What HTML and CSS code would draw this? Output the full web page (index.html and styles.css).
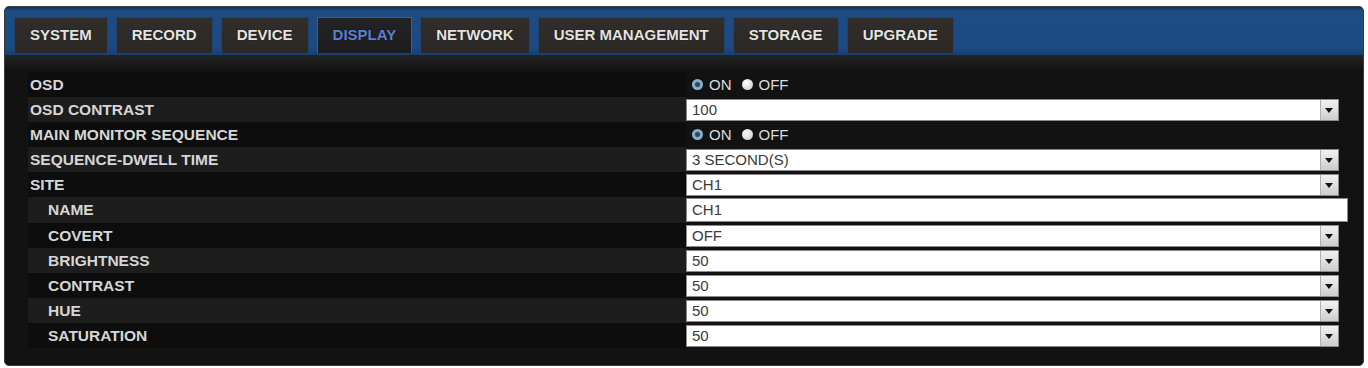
FILE: index.html
```html
<!DOCTYPE html>
<html lang="en">
<head>
    <meta charset="UTF-8">
    <title>Display Setup</title>
    <link rel="stylesheet" href="styles.css">
</head>
<body>
    <div class="panel">
        <!-- Onglets -->
        <div class="tabbar">
            <div class="tab">SYSTEM</div>
            <div class="tab">RECORD</div>
            <div class="tab">DEVICE</div>
            <div class="tab active">DISPLAY</div>
            <div class="tab">NETWORK</div>
            <div class="tab">USER MANAGEMENT</div>
            <div class="tab">STORAGE</div>
            <div class="tab">UPGRADE</div>
        </div>

        <div class="rows">
            <div class="row">
                <div class="label">OSD</div>
                <div class="control">
                    <span class="radio checked"></span><span class="radio-text">ON</span>
                    <span class="radio"></span><span class="radio-text">OFF</span>
                </div>
            </div>
            <div class="row">
                <div class="label">OSD CONTRAST</div>
                <div class="control"><div class="select">100<span class="arrow"></span></div></div>
            </div>
            <div class="row">
                <div class="label">MAIN MONITOR SEQUENCE</div>
                <div class="control">
                    <span class="radio checked"></span><span class="radio-text">ON</span>
                    <span class="radio"></span><span class="radio-text">OFF</span>
                </div>
            </div>
            <div class="row">
                <div class="label">SEQUENCE-DWELL TIME</div>
                <div class="control"><div class="select">3 SECOND(S)<span class="arrow"></span></div></div>
            </div>
            <div class="row">
                <div class="label">SITE</div>
                <div class="control"><div class="select">CH1<span class="arrow"></span></div></div>
            </div>
            <div class="row row-name">
                <div class="label sub">NAME</div>
                <div class="control"><div class="text-input">CH1</div></div>
            </div>
            <div class="row">
                <div class="label sub">COVERT</div>
                <div class="control"><div class="select">OFF<span class="arrow"></span></div></div>
            </div>
            <div class="row">
                <div class="label sub">BRIGHTNESS</div>
                <div class="control"><div class="select">50<span class="arrow"></span></div></div>
            </div>
            <div class="row">
                <div class="label sub">CONTRAST</div>
                <div class="control"><div class="select">50<span class="arrow"></span></div></div>
            </div>
            <div class="row">
                <div class="label sub">HUE</div>
                <div class="control"><div class="select">50<span class="arrow"></span></div></div>
            </div>
            <div class="row">
                <div class="label sub">SATURATION</div>
                <div class="control"><div class="select">50<span class="arrow"></span></div></div>
            </div>
        </div>
    </div>
</body>
</html>
```

FILE: styles.css
```css
body {
    margin: 0;
    background-color: #fff;
    font-family: "Liberation Sans", Arial, sans-serif;
}
.panel {
    margin: 6px 4px 0 4px;
    height: 358px;
    background-color: #121212;
    border: 1px solid #3a3a3a;
    border-radius: 5px;
    overflow: hidden;
}

/* Barre d'onglets */
.tabbar {
    height: 38px;
    padding: 10px 0 0 9px;
    display: flex;
    gap: 8px;
    background: linear-gradient(#143358 0, #1d4c85 4px, #1c4a82 40px, #173f70 48px);
}
.tab {
    padding: 0 15px;
    height: 36px;
    line-height: 34px;
    box-sizing: border-box;
    font-size: 15px;
    font-weight: bold;
    color: #e4e4e4;
    background: linear-gradient(#312d2b, #2b2826);
    border: 1px solid #1f4270;
    border-bottom: none;
    text-shadow: 0 0 1px #000;
}
.tab.active {
    background: linear-gradient(#232325, #1c1c1e);
    border-color: #2a62a8;
    color: #5f80d2;
}

/* Lignes de réglages */
.rows {
    padding: 17px 0 0 23px;
    background: linear-gradient(#232323 0, #121212 16px);
}
.row {
    display: flex;
    align-items: center;
    height: 25px;
}
.row-name {
    height: 26px;
}
.row:nth-child(odd) .label {
    background-color: #0d0d0d;
}
.row:nth-child(even) .label {
    background-color: #1d1d1d;
}
.label {
    width: 658px;
    height: 100%;
    line-height: 25px;
    padding-left: 2px;
    box-sizing: border-box;
    font-size: 15.5px;
    font-weight: bold;
    color: #d6d6d6;
}
.label.sub {
    padding-left: 20px;
}
.control {
    display: flex;
    align-items: center;
    height: 100%;
}

/* Boutons radio */
.radio {
    width: 11px;
    height: 11px;
    border-radius: 50%;
    background: radial-gradient(circle at 40% 35%, #ffffff, #c4c4c4);
    margin-left: 6px;
}
.radio.checked {
    background: radial-gradient(circle, #2e4a60 0, #2e4a60 2px, #7ea6c4 3px, #a9c4d8);
}
.radio-text {
    font-size: 15px;
    color: #dcdcdc;
    margin-left: 6px;
    margin-right: 4px;
}

/* Listes déroulantes */
.select, .text-input {
    position: relative;
    height: 22px;
    line-height: 20px;
    width: 653px;
    box-sizing: border-box;
    padding-left: 5px;
    background-color: #fff;
    border: 1px solid #8a8a8a;
    font-size: 15px;
    color: #3a3a3a;
}
.text-input {
    width: 662px;
    height: 24px;
    line-height: 22px;
}
.arrow {
    position: absolute;
    right: 0;
    top: 0;
    width: 17px;
    height: 20px;
    background: linear-gradient(#f2f2f2, #cdcdcd);
    border-left: 1px solid #b0b0b0;
}
.arrow::after {
    content: "";
    position: absolute;
    left: 4px;
    top: 8px;
    border-left: 4px solid transparent;
    border-right: 4px solid transparent;
    border-top: 5px solid #111;
}
```
